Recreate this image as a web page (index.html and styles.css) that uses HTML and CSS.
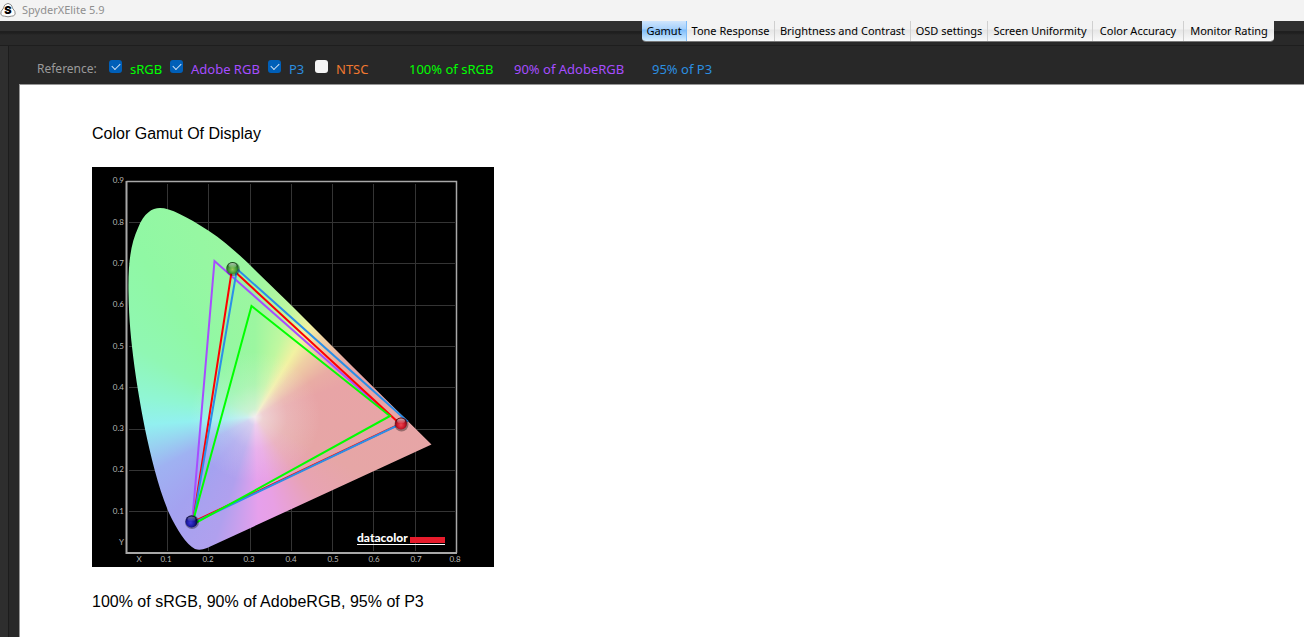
FILE: index.html
```
<!DOCTYPE html>
<html lang="en">
<head>
<meta charset="utf-8">
<title>SpyderXElite 5.9</title>
<link rel="stylesheet" href="styles.css">
</head>
<body>
<header class="titlebar">
  <svg class="app-icon" width="16" height="16" viewBox="0 0 16 16">
    <path d="M5.2 2.6Q8 .2 10.8 2.6Q12.2 4 12.4 6Q15.8 9.5 15.2 12Q14.2 14.6 11.3 14.2Q8 15.400 4.700 14.200Q1.800 14.600 .8 12Q.2 9.500 3.600 6Q3.800 4 5.200 2.600Z" fill="#fff" stroke="#8b8b8b"/>
    <text x="8" y="12" text-anchor="middle" class="app-letter">S</text>
  </svg>
  <h1 class="app-name">SpyderXElite 5.9</h1>
</header>
<nav class="toolbar">
  <div class="tabs">
    <button class="tab tab-gamut active">Gamut</button>
    <button class="tab tab-tone">Tone Response</button>
    <button class="tab tab-bright">Brightness and Contrast</button>
    <button class="tab tab-osd">OSD settings</button>
    <button class="tab tab-uniform">Screen Uniformity</button>
    <button class="tab tab-accuracy">Color Accuracy</button>
    <button class="tab tab-rating">Monitor Rating</button>
  </div>
</nav>
<div class="workspace">
  <div class="rail"></div>
  <main class="content">
    <div class="options">
      <span class="ref-title">Reference:</span>
      <label class="ref srgb"><input type="checkbox" checked><span>sRGB</span></label>
      <label class="ref adobe"><input type="checkbox" checked><span>Adobe RGB</span></label>
      <label class="ref p3"><input type="checkbox" checked><span>P3</span></label>
      <label class="ref ntsc"><input type="checkbox"><span>NTSC</span></label>
      <span class="result result-srgb">100% of sRGB</span>
      <span class="result result-adobe">90% of AdobeRGB</span>
      <span class="result result-p3">95% of P3</span>
    </div>
    <section class="report">
      <h2 class="report-title">Color Gamut Of Display</h2>
      <svg class="chart" width="402" height="400" viewBox="0 0 402 400">
        <defs>
          <clipPath id="locus"><path d="M68 41C78 41 94 49 117 64C135 76 150 90 165 105L200 139L261 200L339.500 277.500L115 381Q108 384 103 382C94 377 85 363 77 346C66 320 59 290 53 262C48 236 45 218 42.500 200C39 172 37 155 36.500 125C36 95 39 76 46 61C52 46 60 41 68 41Z"/></clipPath>
          <radialGradient id="ballGreen" cx=".5" cy=".62" r=".55"><stop offset="0" stop-color="#9bc95a"/><stop offset=".6" stop-color="#3d9a34"/><stop offset="1" stop-color="#174d18"/></radialGradient>
          <radialGradient id="ballRed" cx=".5" cy=".62" r=".55"><stop offset="0" stop-color="#f04450"/><stop offset=".6" stop-color="#c41426"/><stop offset="1" stop-color="#5e0812"/></radialGradient>
          <radialGradient id="ballBlue" cx=".42" cy=".6" r=".55"><stop offset="0" stop-color="#3a35d8"/><stop offset=".6" stop-color="#1a189c"/><stop offset="1" stop-color="#080838"/></radialGradient>
          <linearGradient id="shine" x2="0" y2="1"><stop offset="0" stop-color="#fff" stop-opacity=".65"/><stop offset="1" stop-color="#fff" stop-opacity=".05"/></linearGradient>
        </defs>
        <rect width="402" height="400" fill="#000"/>
        <path class="grid" d="M37 55.500H363M37 96.500H363M37 138.500H363M37 179.500H363M37 220.500H363M37 262.500H363M37 303.500H363M37 344.500H363M75.500 17V384M116.500 17V384M158.500 17V384M199.500 17V384M240.500 17V384M281.500 17V384M323.500 17V384"/>
        <g clip-path="url(#locus)">
          <foreignObject x="0" y="0" width="402" height="400"><div class="spectrum"></div></foreignObject>
        </g>
        <path d="M34.500 14.500H364.500V386" fill="none" stroke="#a8a8a8" stroke-width="1.500"/>
        <path d="M34.500 14V386H365" fill="none" stroke="#a8a8a8" stroke-width="2"/>
        <g class="triangles">
          <path stroke="#a64dff" d="M100 357L122.500 94L298 249"/>
          <path stroke="#f00" d="M140 102L308 257L101 355Z"/>
          <path stroke="#2b8fe8" d="M145 102L315 254L101 356Z"/>
          <path stroke="#0f0" d="M159.500 139L298 249L100 358Z"/>
        </g>
        <g>
          <circle cx="141" cy="102" r="7" fill="#000" opacity=".35"/><circle cx="140.500" cy="101" r="6" fill="url(#ballGreen)"/><ellipse cx="140.500" cy="98.500" rx="4" ry="2.500" fill="url(#shine)"/>
          <circle cx="309.500" cy="257.500" r="7" fill="#000" opacity=".35"/><circle cx="309" cy="256.500" r="6" fill="url(#ballRed)"/><ellipse cx="309" cy="254" rx="4" ry="2.500" fill="url(#shine)"/>
          <circle cx="100" cy="355" r="7" fill="#000" opacity=".35"/><circle cx="99.500" cy="354.500" r="6" fill="url(#ballBlue)"/><ellipse cx="99.500" cy="352" rx="4" ry="2.500" fill="url(#shine)" opacity=".6"/>
        </g>
        <g class="ticks" text-anchor="end">
          <text x="32" y="16">0.9</text><text x="32" y="58">0.8</text><text x="32" y="99">0.7</text><text x="32" y="140">0.6</text><text x="32" y="182">0.5</text><text x="32" y="223">0.4</text><text x="32" y="264">0.3</text><text x="32" y="305">0.2</text><text x="32" y="347">0.1</text><text x="32" y="378">Y</text>
        </g>
        <g class="ticks" text-anchor="middle">
          <text x="47" y="395">X</text><text x="74" y="395">0.1</text><text x="116" y="395">0.2</text><text x="157" y="395">0.3</text><text x="199" y="395">0.4</text><text x="241" y="395">0.5</text><text x="282" y="395">0.6</text><text x="324" y="395">0.7</text><text x="363" y="395">0.8</text>
        </g>
        <text class="brand" x="265" y="375">datacolor</text>
        <rect x="318" y="370" width="35" height="6" fill="#e81c2c"/>
        <rect x="265" y="377" width="88" height="1" fill="#fff"/>
      </svg>
      <p class="summary">100% of sRGB, 90% of AdobeRGB, 95% of P3</p>
    </section>
  </main>
</div>
</body>
</html>
```
FILE: styles.css
```
* { box-sizing: border-box; }
body {
  margin: 0;
  min-height: 100vh;
  display: flex;
  flex-direction: column;
  background: #282828;
  font-family: "Noto Sans", "Open Sans", sans-serif;
}
.titlebar {
  display: flex;
  align-items: center;
  gap: 6px;
  height: 21px;
  padding-bottom: 2px;
  background: #f3f3f3;
}
.app-letter { font: 900 11px Inter, sans-serif; fill: #000; }
.app-name { margin: 0; font-size: 11px; font-weight: 400; color: #8f8f8f; }
.toolbar {
  display: flex;
  justify-content: flex-end;
  align-items: flex-start;
  height: 25px;
  padding-right: 30px;
  border-bottom: 1px solid #1e1e1e;
  background: linear-gradient(#303030 0 10px, #1f1f1f 10px 12px, #292929 14px);
}
.tabs {
  display: flex;
  height: 21px;
  border-bottom: 1px solid #777;
  border-radius: 0 0 4px 4px;
  overflow: hidden;
}
.tab {
  padding: 0;
  border: 0;
  border-right: 1px solid #d0d0d0;
  background: linear-gradient(#f3f3f3 0 8px, #e6e6e6 9px, #fafafa);
  font: 11px/20px "Noto Sans", "Open Sans", sans-serif;
  color: #000;
  white-space: nowrap;
}
.tab.active {
  background: linear-gradient(#cfe5fd, #a5d0fb 8px, #7dbcfa 9px, #d5eeff);
  border-right-color: #7dbcfa;
}
.tab-gamut { width: 45px; }
.tab-tone { width: 88px; }
.tab-bright { width: 136px; }
.tab-osd { width: 77px; }
.tab-uniform { width: 105px; }
.tab-accuracy { width: 91px; }
.tab-rating { width: 90px; border-right: 0; }
.workspace { display: flex; flex: 1; }
.rail { width: 9px; background: #2e2e2e; border-right: 1px solid #1c1c1c; }
.content { flex: 1; display: flex; flex-direction: column; padding-left: 10px; }
.options {
  display: flex;
  align-items: center;
  height: 38px;
  padding: 8px 0 0 18px;
  font-size: 13px;
  line-height: 18px;
  white-space: nowrap;
}
.ref-title { width: 72px; font-size: 12px; color: #9a9a9a; }
.ref { display: flex; gap: 8px; }
.ref input {
  appearance: none;
  display: grid;
  place-items: center;
  width: 13px;
  height: 13px;
  margin: 0;
  border-radius: 3px;
  background: #f5f5f5;
}
.ref input:checked { background: #005fb8; }
.ref input:checked::after {
  content: "";
  width: 7px;
  height: 4px;
  border: solid #cfe2f5;
  border-width: 0 0 1px 1px;
  transform: translateY(-1px) rotate(-45deg);
}
.srgb { width: 61px; color: #0f0; }
.adobe { width: 98px; color: #a64dff; }
.p3 { width: 47px; color: #2b8fe0; }
.ntsc { width: 94px; color: #f07830; }
.result-srgb { width: 105px; color: #0f0; }
.result-adobe { width: 138px; color: #a64dff; }
.result-p3 { color: #2b8fe0; }
.report {
  flex: 1;
  padding: 39px 72px 16px;
  border: solid #969696;
  border-width: 1px 0 0 1px;
  background: #fff;
  color: #000;
  font: 16px/20px "Liberation Sans", sans-serif;
}
.report-title { margin: 0 0 23px; font-size: 16px; font-weight: 400; }
.chart { display: block; margin-bottom: 25px; }
.summary { margin: 0; }
.grid { fill: none; stroke: #343434; }
.triangles { fill: none; stroke-width: 2; }
.ticks { font: 8px Lato, sans-serif; fill: #b8b8b8; }
.brand { font: 900 12px Lato, sans-serif; fill: #fff; }
.spectrum {
  width: 402px;
  height: 400px;
  background:
    radial-gradient(circle at 163px 250px, #f3eef0 0, #f3eef099 8px, #f3eef03a 32px, #f3eef000 65px),
    conic-gradient(from 0deg at 163px 250px, #9cf6a0 0deg, #c0f7a0 18deg, #f2f2a2 31deg, #efd0a4 41deg, #e9aca4 58deg, #e8a4a6 70deg, #e6a6a6 118deg, #e8a3b4 143deg, #e8a0e4 168deg, #e6a0ec 178deg, #b0a0ee 198deg, #a4a2f0 220deg, #9fb2f2 242deg, #92f0f0 266deg, #90f6d4 280deg, #90f7b4 300deg, #90f8a4 325deg, #9cf6a0 360deg);
}
```
